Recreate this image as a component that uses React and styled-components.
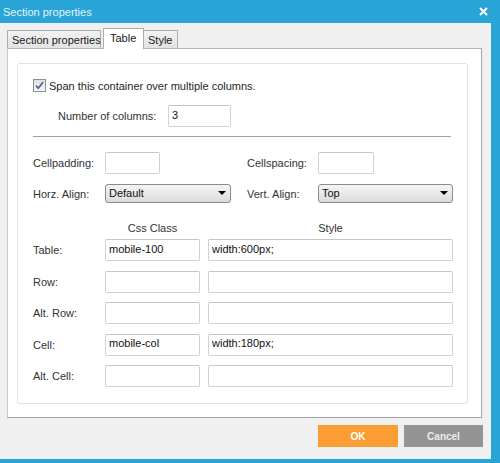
import React from 'react';
import styled, { createGlobalStyle } from 'styled-components';

const colors = {
	frame: '#29a4d6',
	body: '#f0f0f0',
	label: '#333333',
	field: '#d2d2d2',
	ok: '#fb9d35',
	cancel: '#949494'
};

const GlobalStyle = createGlobalStyle`
	html, body {
		margin: 0;
		padding: 0;
		overflow: hidden;
	}
	body {
		font-family: "Liberation Sans", Arial, sans-serif;
		font-size: 11px;
		color: ${colors.label};
	}
	* {
		box-sizing: border-box;
	}
`;

const Window = styled.div`
	width: 500px;
	height: 463px;
	display: flex;
	flex-direction: column;
	background: ${colors.body};
	border-right: 9px solid ${colors.frame};
	border-bottom: 4px solid ${colors.frame};
`;

const TitleBar = styled.div`
	height: 23px;
	flex-shrink: 0;
	margin-right: -9px;
	padding: 0 12px 0 3px;
	display: flex;
	align-items: center;
	justify-content: space-between;
	background: ${colors.frame};
	color: #e4f3fa;
	font-size: 11px;
`;

const Body = styled.div`
	flex: 1;
	padding: 6px 9px 0 7px;
	display: flex;
	flex-direction: column;
`;

const TabStrip = styled.div`
	height: 19px;
	display: flex;
	align-items: flex-end;
`;

const Tab = styled.div`
	position: relative;
	z-index: ${props => props.active ? 1 : 0};
	width: ${props => props.width}px;
	height: ${props => props.active ? 21 : 18}px;
	margin: ${props => props.active ? '0 0 -1px 2px' : '0'};
	padding-left: ${props => props.active ? 6 : 4}px;
	padding-bottom: ${props => props.active ? 3 : 0}px;
	display: flex;
	align-items: center;
	white-space: nowrap;
	border: 1px solid #acacac;
	border-bottom: none;
	border-left: ${props => props.joined ? 'none' : '1px solid #acacac'};
	background: ${props => props.active ? '#ffffff' : 'linear-gradient(#f2f2f2, #e3e3e3)'};
	color: #1a1a1a;
	font-size: 11px;
`;

const Panel = styled.div`
	height: 370px;
	flex-shrink: 0;
	background: #ffffff;
	border: 1px solid #a3a3a3;
	border-top-color: #b4b4b4;
	border-left-color: #c9c9c9;
	padding: 14px 0 0 9px;
`;

const Box = styled.div`
	width: 451px;
	height: 341px;
	border: 1px solid #dde4e8;
	border-radius: 3px;
	padding: 15px 14px 0 15px;
`;

const CheckRow = styled.div`
	height: 13px;
	display: flex;
	align-items: center;
	gap: 3px;
	color: #1e1e1e;
`;

const ColumnsRow = styled.div`
	margin-top: 13px;
	padding-left: 25px;
	display: flex;
	align-items: center;
`;

const Label = styled.span`
	width: ${props => props.width ? `${props.width}px` : 'auto'};
	color: ${colors.label};
	white-space: nowrap;
`;

const Separator = styled.div`
	width: 418px;
	margin-top: 9px;
	border-top: 1px solid #a0a0a0;
`;

const AlignGrid = styled.div`
	margin-top: 15px;
	display: grid;
	grid-template-columns: 72px 142px 71px 135px;
	grid-template-rows: 22px 19px;
	row-gap: 10px;
	align-items: center;
`;

const ClassHeader = styled.div`
	margin-top: 19px;
	height: 13px;
	display: grid;
	grid-template-columns: 64px 95px 245px;
	column-gap: 8px;
	line-height: 13px;
	text-align: center;
	color: ${colors.label};
`;

const ClassGrid = styled.div`
	margin-top: 4px;
	display: grid;
	grid-template-columns: 64px 95px 245px;
	grid-auto-rows: 22px;
	column-gap: 8px;
	row-gap: 9.5px;
	align-items: center;
`;

const Field = styled.input`
	width: ${props => props.width ? `${props.width}px` : '100%'};
	height: 22px;
	margin: 0;
	padding: 0 3px 3px;
	border: 1px solid ${colors.field};
	border-top-color: #c6c6c6;
	border-radius: 2px;
	background: #ffffff;
	color: #111111;
	font-family: "Liberation Sans", Arial, sans-serif;
	font-size: 11px;
	outline: none;
`;

const Select = styled.div`
	width: ${props => props.width}px;
	height: 19px;
	padding: 0 4px 1px 3px;
	display: flex;
	align-items: center;
	justify-content: space-between;
	border: 1px solid #8c8c8c;
	border-radius: 3px;
	background: linear-gradient(#f5f5f5, #e9e9e9 50%, #dadada);
	color: #111111;
`;

const Arrow = styled.span`
	width: 0;
	height: 0;
	border-left: 4px solid transparent;
	border-right: 4px solid transparent;
	border-top: 4px solid #000000;
`;

const ButtonRow = styled.div`
	margin-top: 7px;
	margin-right: -1px;
	display: flex;
	justify-content: flex-end;
	gap: 6px;
`;

const Button = styled.button`
	width: ${props => props.width}px;
	height: 22px;
	border: none;
	margin: 0;
	padding: 0;
	background: ${props => props.bg};
	color: ${props => props.fg};
	font-family: "Liberation Sans", Arial, sans-serif;
	font-weight: bold;
	font-size: 10px;
`;

const CheckIcon = () => (
	<svg width="13" height="13" viewBox="0 0 13 13">
		<defs>
			<linearGradient id="cb" x1="0" y1="0" x2="0" y2="1">
				<stop offset="0" stopColor="#dedede" />
				<stop offset="1" stopColor="#f7f7f7" />
			</linearGradient>
		</defs>
		<rect x="0.5" y="0.5" width="12" height="12" fill="url(#cb)" stroke="#8f8f8f" />
		<path d="M3 6.6 L5.3 9.2 L10 3.2" fill="none" stroke="#44609e" strokeWidth="1.7" />
	</svg>
);

const CloseIcon = () => (
	<svg width="9" height="9" viewBox="0 0 9 9">
		<path d="M1 1 L8 8 M8 1 L1 8" stroke="#ffffff" strokeWidth="2" />
	</svg>
);

const rows = [
	{ name: 'Table:', css: 'mobile-100', style: 'width:600px;' },
	{ name: 'Row:', css: '', style: '' },
	{ name: 'Alt. Row:', css: '', style: '' },
	{ name: 'Cell:', css: 'mobile-col', style: 'width:180px;' },
	{ name: 'Alt. Cell:', css: '', style: '' }
];

export default function App() {
	return (
		<Window>
			<GlobalStyle />
			<TitleBar>
				<span>Section properties</span>
				<CloseIcon />
			</TitleBar>
			<Body>
				<TabStrip>
					<Tab width={94}>Section properties</Tab>
					<Tab width={41} active>Table</Tab>
					<Tab width={34} joined>Style</Tab>
				</TabStrip>
				<Panel>
					<Box>
						<CheckRow>
							<CheckIcon />
							<span>Span this container over multiple columns.</span>
						</CheckRow>
						<ColumnsRow>
							<Label width={110}>Number of columns:</Label>
							<Field width={63} defaultValue="3" readOnly />
						</ColumnsRow>
						<Separator />
						<AlignGrid>
							<Label>Cellpadding:</Label>
							<Field width={55} readOnly />
							<Label>Cellspacing:</Label>
							<Field width={56} readOnly />
							<Label>Horz. Align:</Label>
							<Select width={126}>
								<span>Default</span>
								<Arrow />
							</Select>
							<Label>Vert. Align:</Label>
							<Select width={135}>
								<span>Top</span>
								<Arrow />
							</Select>
						</AlignGrid>
						<ClassHeader>
							<span />
							<span>Css Class</span>
							<span>Style</span>
						</ClassHeader>
						<ClassGrid>
							{rows.map(row => (
								<React.Fragment key={row.name}>
									<Label>{row.name}</Label>
									<Field defaultValue={row.css} readOnly />
									<Field defaultValue={row.style} readOnly />
								</React.Fragment>
							))}
						</ClassGrid>
					</Box>
				</Panel>
				<ButtonRow>
					<Button width={80} bg={colors.ok} fg="#ffffff">OK</Button>
					<Button width={79} bg={colors.cancel} fg="#ececec">Cancel</Button>
				</ButtonRow>
			</Body>
		</Window>
	);
}
